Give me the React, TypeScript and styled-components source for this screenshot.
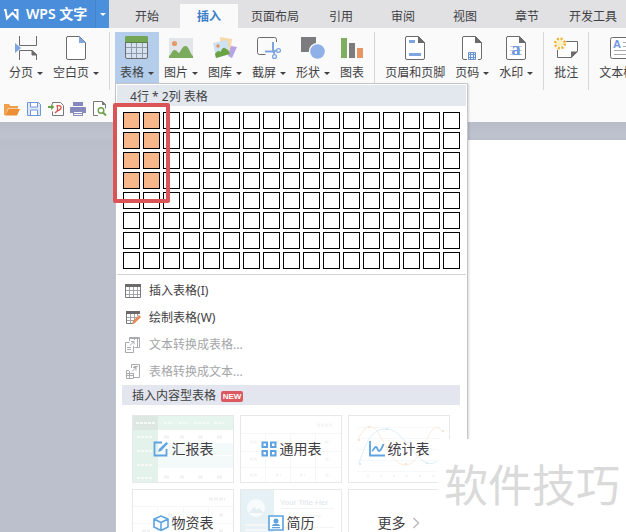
import React from "react";
import styled, { createGlobalStyle, css } from "styled-components";

const GlobalStyle = createGlobalStyle`
  * { box-sizing: border-box; }
  body {
    margin: 0;
    font-family: "Noto Sans", "Noto Sans CJK SC", sans-serif;
    font-size: 12px;
    line-height: 16px;
    color: #3f4043;
  }
  button {
    font: inherit;
    color: inherit;
    background: none;
    border: 0;
    padding: 0;
    margin: 0;
  }
`;

const Window = styled.div`
  position: relative;
  display: flex;
  flex-direction: column;
  height: 100vh;
  overflow: hidden;
  background: #bcc0cc;
`;

/* ---------- title and tabs ---------- */

const TitleBar = styled.header`
  display: flex;
  height: 28px;
  flex: none;
  background: #e1e1e3;
`;

const AppButton = styled.button`
  display: flex;
  align-items: center;
  gap: 6px;
  width: 95px;
  padding-left: 4px;
  flex: none;
  color: #fff;
  background: #4a8edb;
  font-size: 14px;
  font-weight: 600;
  white-space: nowrap;
`;

const AppMenuButton = styled.button`
  display: flex;
  align-items: center;
  justify-content: center;
  width: 14px;
  flex: none;
  color: #fff;
  background: #4a90dd;
  border-left: 1px solid #4384cd;
`;

const Tabs = styled.nav`
  display: flex;
  align-items: flex-end;
  margin-left: 7px;
`;

const Tab = styled.button<{ $active?: boolean }>`
  height: 24px;
  min-width: 58px;
  padding: 2px 9px 0;
  margin: 0 2px;
  flex: none;
  ${(p) =>
    p.$active &&
    css`
      background: #fafafa;
      color: #3a7fc8;
      font-weight: 700;
    `}
`;

/* ---------- ribbon ---------- */

const Ribbon = styled.section`
  flex: none;
  height: 94px;
  background: #fafafa;
`;

const ToolRow = styled.div`
  display: flex;
  align-items: flex-start;
  padding: 4px 0 0 4px;
`;

const ToolSlot = styled.div`
  position: relative;
  flex: none;
`;

const Tool = styled.button<{ $open?: boolean }>`
  display: flex;
  flex-direction: column;
  align-items: center;
  gap: 5px;
  height: 51px;
  padding: 4px 5px 0;
  background: ${(p) => (p.$open ? "#b3cdea" : "transparent")};
`;

const ToolLabel = styled.span`
  display: flex;
  align-items: center;
  gap: 4px;
  white-space: nowrap;
`;

const Separator = styled.span`
  width: 1px;
  height: 58px;
  margin: 0 5px;
  flex: none;
  background: #d5d7da;
`;

const QuickBar = styled.div`
  display: flex;
  gap: 6px;
  padding: 11px 0 0 4px;
`;

const QuickButton = styled.button`
  display: flex;
  width: 16px;
  height: 16px;
`;

const Canvas = styled.main`
  flex: 1;
  min-height: 0;
  display: flex;
  padding: 18px 0 0 140px;
  background: linear-gradient(#b9bdca, #bfc3cf 14px, #babeca 18px, #bcc0cc 30px);
`;

const Sheet = styled.div`
  flex: 1;
  background: #fff;
`;

/* ---------- table menu ---------- */

const Menu = styled.div`
  position: absolute;
  z-index: 2;
  top: 51px;
  left: 0;
  width: 353px;
  padding: 1px;
  background: #fff;
  border: 1px solid #c3c5c9;
  box-shadow: 1px 1px 2px rgba(0, 0, 0, 0.15);
`;

const SizeCaption = styled.div`
  height: 21px;
  padding-left: 13px;
  line-height: 24px;
  background: #e3e7ee;
`;

const SizeGrid = styled.div`
  position: relative;
  display: grid;
  grid-template-columns: repeat(17, 17px);
  grid-auto-rows: 17px;
  gap: 3px;
  padding: 6px 6px 5px;
  border-bottom: 1px solid #d3d4d7;
`;

const Cell = styled.button<{ $on: boolean }>`
  border: 1px solid #000;
  background: ${(p) => (p.$on ? "#f8b78b" : "#fff")};
`;

const Highlight = styled.div`
  position: absolute;
  top: -3px;
  left: -4px;
  width: 57px;
  height: 100px;
  border: 4px solid #da5457;
  border-radius: 2px;
  pointer-events: none;
`;

const Commands = styled.div`
  display: flex;
  flex-direction: column;
  padding-top: 2px;
`;

const Command = styled.button`
  display: flex;
  align-items: center;
  gap: 8px;
  height: 27px;
  padding-left: 8px;
  text-align: left;
  &:disabled {
    color: #a4a5a8;
  }
`;

const SectionTitle = styled.h2`
  display: flex;
  align-items: center;
  gap: 5px;
  height: 20px;
  margin: 0 6px 0 5px;
  padding: 2px 0 0 10px;
  font-size: 12px;
  font-weight: 400;
  background: #e3e6ee;
`;

const Badge = styled.span`
  width: 22px;
  height: 11px;
  border-radius: 2px;
  background: #dc5960;
  color: #fff;
  font: 700 8px/11px "Liberation Sans", sans-serif;
  text-align: center;
`;

const Cards = styled.div`
  display: grid;
  grid-template-columns: repeat(3, 102px);
  grid-auto-rows: 68px;
  gap: 6px;
  padding: 10px 15px;
`;

const Card = styled.button`
  position: relative;
  border: 1px solid #e6e8ea;
  background: #fff;
  overflow: hidden;
`;

const Preview = styled.svg`
  position: absolute;
  inset: 0;
  width: 100px;
  height: 66px;
  opacity: 0.6;
`;

const CardLabel = styled.span`
  position: relative;
  display: flex;
  align-items: center;
  justify-content: center;
  gap: 3px;
  font-size: 14px;
  line-height: 20px;
`;

const Watermark = styled.div`
  position: absolute;
  z-index: 3;
  right: 0;
  bottom: 0;
  width: 188px;
  height: 93px;
  padding-left: 6px;
  background: #fff;
  color: #dadada;
  font-size: 44px;
  line-height: 93px;
  white-space: nowrap;
`;

/* ---------- drawings ---------- */

const ink = "#6b6b6d";
const blue = "#7fa5e0";

const Arrow = () => (
  <svg width="6" height="3" viewBox="0 0 6 3" aria-hidden="true">
    <path d="M0 0h6L3 3z" fill="currentColor" />
  </svg>
);

const Svg24 = ({ children }: { children: React.ReactNode }) => (
  <svg width="24" height="24" viewBox="0 0 24 24" fill="none" aria-hidden="true">
    {children}
  </svg>
);

const PageOutline = ({ fold = ink }: { fold?: string }) => (
  <>
    <path d="M3.500.5h12l6 6v15.500a1.500 1.500 0 0 1-1.500 1.500h-16a1.500 1.500 0 0 1-1.500-1.500v-20a1.500 1.500 0 0 1 1.500-1.500z" fill="#fff" stroke={ink} />
    <path d="M15 0v7h7z" fill={fold} />
  </>
);

const BreakIcon = () => (
  <Svg24>
    <path d="M5.500 0v9.500h17V0M5.500 24v-9.500H18l4.500 4.500v5" stroke={ink} />
    <path d="M18 14.500V19h5z" fill={ink} stroke={ink} />
    <path d="M1 7l6 5-6 5z" fill={blue} />
  </Svg24>
);

const BlankIcon = () => (
  <Svg24>
    <PageOutline fold={blue} />
  </Svg24>
);

const TableIcon = () => (
  <Svg24>
    <rect x="0.5" y="0.5" width="22" height="22" rx="1.500" fill="#d3e1f1" stroke={ink} />
    <path d="M0 6V2Q0 0 2 0h19q2 0 2 2v4z" fill="#74a552" />
    <path d="M0 6.500h23" stroke="#5d7d4c" />
    <path d="M1 11.500h21M1 17.500h21M6.500 7v15M11.500 7v15M17.500 7v15" stroke="#929ba7" />
  </Svg24>
);

const PictureIcon = () => (
  <Svg24>
    <rect y="2" width="24" height="20" fill="#e2e6ea" />
    <circle cx="5.500" cy="7.500" r="2.600" fill="#e69a6d" />
    <path d="M0 22v-2c2-1 3-6 5.500-6S9 17 10 17s3-7 6.500-7S21 18 24 20v2z" fill="#7bab5c" />
  </Svg24>
);

const GalleryIcon = () => (
  <Svg24>
    <path d="M7 1l12 2-2 15-9-2z" fill="#f5d9a8" />
    <path d="M18 10l6 1-5 11-4-2z" fill="#b7a2e6" />
    <path d="M0 7l14-3 3 14-14 4z" fill="#cfe2f3" />
    <circle cx="5" cy="10" r="1.700" fill="#e8935e" />
    <path d="M3 22l-1-4C4 15 6 14 7.500 16c2-5 4-5 5.500-3 1.500 0 2.500 1.500 3.500 3l.5 2z" fill="#69a344" />
  </Svg24>
);

const CaptureIcon = () => (
  <Svg24>
    <path d="M8.500 18.500h-6a2 2 0 0 1-2-2v-13a2 2 0 0 1 2-2h15a2 2 0 0 1 2 2V6" stroke={ink} />
    <path d="M16 6v8l1.500 4M8 15.500h9l2-1" stroke={blue} strokeWidth="2" />
    <circle cx="21.500" cy="14.500" r="1.900" stroke={blue} strokeWidth="1.400" />
    <circle cx="17.500" cy="20.500" r="1.900" stroke={blue} strokeWidth="1.400" />
  </Svg24>
);

const ShapesIcon = () => (
  <Svg24>
    <path d="M0 1h15v15H0z" fill="#7c7c7e" />
    <circle cx="16.500" cy="15.500" r="8" fill="#8fb1e8" stroke="#fafafa" strokeWidth="1.400" />
  </Svg24>
);

const ChartIcon = () => (
  <Svg24>
    <path d="M1 2h6v20H1z" fill="#7fae60" />
    <path d="M9 7h6v15H9z" fill="#7c7c7e" />
    <path d="M17 12h6v10h-6z" fill="#e69563" />
  </Svg24>
);

const HeaderIcon = () => (
  <Svg24>
    <PageOutline />
    <path d="M6 4h6v3H6zM6 17h12v3H6z" fill={blue} />
  </Svg24>
);

const PageNumberIcon = () => (
  <Svg24>
    <PageOutline />
    <path d="M7 15h11v9H7z" fill="#fafafa" />
    <path d="M8.500 16.500h7v7h-7z" fill="#e6eefb" stroke="#6d93cf" />
    <path d="M10.500 17v6M13.500 17v6M9 18.500h6M9 21.500h6" stroke="#6d93cf" />
  </Svg24>
);

const WatermarkIcon = () => (
  <Svg24>
    <PageOutline />
    <path d="M6 10.500h12M6 14.500h12M6 18.500h12" stroke="#c9cdd4" />
    <text x="12" y="19" textAnchor="middle" fontFamily="Liberation Serif, serif" fontSize="19" fontWeight="700" fill="#6f98dc">
      a
    </text>
  </Svg24>
);

const CommentIcon = () => (
  <Svg24>
    <path d="M11 5.500h12.500V15l-6 6.500h-14V14" fill="#fff" stroke={ink} />
    <path d="M17 22v-6.500h7z" fill={ink} />
    <circle cx="6" cy="7.500" r="6.500" fill="#fafafa" />
    <circle cx="6" cy="7.500" r="3" fill="#fdf0c0" />
    <circle cx="6" cy="7.500" r="4.800" stroke="#efb52f" strokeWidth="2.600" strokeDasharray="2.100 1.670" />
  </Svg24>
);

const TextBoxIcon = () => (
  <Svg24>
    <rect x="0.5" y="1.500" width="23" height="21" rx="2" fill="#fff" stroke={ink} />
    <text x="3" y="12" fontFamily="Liberation Sans, sans-serif" fontSize="11" fontWeight="700" fill="#6f98dc">
      A
    </text>
    <path d="M13 6.500h8M13 10.500h8M4 14.500h17M4 18.500h17" stroke="#a9abb0" />
  </Svg24>
);

const Svg16 = ({ children }: { children: React.ReactNode }) => (
  <svg width="16" height="16" viewBox="0 0 16 16" fill="none" aria-hidden="true">
    {children}
  </svg>
);

const OpenIcon = () => (
  <Svg16>
    <path d="M0 14V3h5l1.500 2H14v2.500H4L1.500 14z" fill="#f0a04b" />
    <path d="M4.500 8H16l-3 6.500H1z" fill="#ec8f34" />
  </Svg16>
);

const SaveIcon = () => (
  <Svg16>
    <path d="M1.500 1.500h11l2 2v11h-13z" fill="#dfe8f8" stroke="#7297d6" />
    <path d="M4.500 2v4h7V2M4.500 14v-5h7v5" fill="#fff" stroke="#7297d6" />
  </Svg16>
);

const PdfIcon = () => (
  <Svg16>
    <path d="M4.500 3.500v-2h8l3 3v10h-11v-4" fill="#fff" stroke="#77787b" />
    <path d="M0 5h3V3l3.500 3L3 9V7H0z" fill="#6da14d" />
    <path d="M7 12c3-1 3-5 2-7 4-1 5 1 3.500 3S9 9.500 7 12" stroke="#d65552" strokeWidth="1.300" />
  </Svg16>
);

const PrintIcon = () => (
  <Svg16>
    <path d="M3 1h10v4H3zM1 6h14q1 0 1 1v5H0V7q0-1 1-1zM3 10h10v5H3z" fill="#8589bd" />
    <path d="M4 11h8v1H4zM4 13h8v1H4zM3 5h10v1H3z" fill="#fff" />
  </Svg16>
);

const PreviewIcon = () => (
  <Svg16>
    <path d="M6 14.500H1.500V.5h9l3 3v4" fill="#fff" stroke="#77787b" />
    <path d="M10 0v4h4z" fill="#77787b" />
    <circle cx="9" cy="9.500" r="2.800" stroke="#6da14d" strokeWidth="1.400" />
    <path d="M11 11.500l3 3" stroke="#6da14d" strokeWidth="1.800" />
  </Svg16>
);

const InsertGridIcon = () => (
  <Svg16>
    <path d="M.5 1.500h15v13H.5z" fill="#fff" stroke="#77787b" />
    <path d="M0 1h16v3H0z" fill="#6b6b6d" />
    <path d="M1 7.500h14M1 11.500h14M4.500 4v10M8.500 4v10M12.500 4v10" stroke="#a4a5a8" />
  </Svg16>
);

const DrawGridIcon = () => (
  <Svg16>
    <path d="M14.500 4V1.500h-13v12H8" stroke="#77787b" />
    <path d="M1 1h14v3H1z" fill="#6b6b6d" />
    <path d="M2 7.500h10M2 10.500h7M5.500 4v9M9.500 4v6M12.500 4v2" stroke="#a4a5a8" />
    <path d="M14 5l2 2-6 6-3 1.500L8 11z" fill="#e08b55" />
  </Svg16>
);

const TextToTableIcon = () => (
  <Svg16>
    <path d="M4.500 4V.5h10v10H9.500M4 1.500h11M12.500 2v8M9.500 2v1" stroke="#a9aaad" />
    <path d="M.5 5.500h4M.5 5.500v10h8V9M2 10.500h4M2 12.500h4M5 8.500L9 4.500M6 4.500h3v3" stroke="#a9aaad" />
  </Svg16>
);

const TableToTextIcon = () => (
  <Svg16>
    <path d="M6.500 4V.5h8v13H8M9 2.500h4" stroke="#a9aaad" />
    <path d="M4 6.500H1.500v8h7V9M1 9.500h8M4.500 7v7M1 11.500h7M7 7.500l4-4M8 3.500h3v3" stroke="#a9aaad" />
  </Svg16>
);

const accent = "#5ea3e0";

const EditIcon = () => (
  <Svg16>
    <path d="M9 1.500H1.500v13h12V8" stroke={accent} strokeWidth="1.800" />
    <path d="M5 11l1-3 7.500-7 1.500 1.500L8 10z" fill={accent} />
  </Svg16>
);

const TilesIcon = () => (
  <Svg16>
    <path d="M1.500 1.500h4.500v4.500H1.500zM10 1.500h4.500v4.500H10zM1.500 10h4.500v4.500H1.500zM10 10h4.500v4.500H10z" stroke={accent} strokeWidth="2" />
  </Svg16>
);

const StatsIcon = () => (
  <Svg16>
    <path d="M1 0v14.500h15" stroke={accent} strokeWidth="1.800" />
    <path d="M3 10c2-1 2-4 4-4s1 4 3 4 3-3 4.500-7" stroke={accent} strokeWidth="1.800" />
  </Svg16>
);

const CubeIcon = () => (
  <Svg16>
    <path d="M8 1l7 3v8l-7 3.500L1 12V4zM1 4l7 3.500L15 4M8 7.500v8" stroke={accent} strokeWidth="1.600" />
  </Svg16>
);

const ResumeIcon = () => (
  <Svg16>
    <path d="M1 1h14v14H1z" fill="#fff" stroke={accent} strokeWidth="1.600" />
    <circle cx="8" cy="6" r="2.500" fill={accent} />
    <path d="M4 11c0-3 8-3 8 0zM4 12h8v1.300H4z" fill={accent} />
  </Svg16>
);

const Chevron = () => (
  <svg width="12" height="14" viewBox="0 0 12 14" fill="none" aria-hidden="true">
    <path d="M4.500 2l5 5-5 5" stroke="#bcbdc0" strokeWidth="1.600" />
  </svg>
);

const ReportPreview = () => (
  <Preview viewBox="0 0 100 66" aria-hidden="true">
    <path d="M0 0h100v14H0z" fill="#d6f0e4" />
    <path d="M0 14h25v52H0z" fill="#d2ecde" />
    <path d="M0 0h25v14H0z" fill="#c8d9d1" />
    <path d="M25 27h75v12H25zM25 40h75v12H25z" fill="#eef8f8" />
    <path d="M3 7h20M31 7h9M46 7h9M61 7h15M81 7h10M4 21h15M4 35h15M4 49h15M4 62h15" stroke="#eef8f3" strokeWidth="2" strokeDasharray="3 1" />
    <path d="M31 21h5M47 21h4M65 21h5M84 21h5M31 61h5M47 61h4M65 61h5M84 61h5" stroke="#e8eaea" strokeWidth="3" />
  </Preview>
);

const GridPreview = () => (
  <Preview viewBox="0 0 100 66" aria-hidden="true">
    <path d="M0 17.500h100M0 35.500h100M0 51.500h100M24.500 17v49M49.500 17v49M74.500 17v49" stroke="#f0f1f2" />
    <path d="M76 9h16M9 26h8M9 43h8M9 59h8M35 26h5M35 59h5M59 59h5M84 26h5M84 43h5M84 59h5" stroke="#f0f0f1" strokeWidth="3" strokeDasharray="3 1" />
  </Preview>
);

const CurvePreview = () => (
  <Preview viewBox="0 0 100 66" aria-hidden="true">
    <path d="M8 11.500h84M8 22.500h84M8 33.500h84M8 44.500h84M8 55.500h84" stroke="#f3f5f7" />
    <path d="M9 24C15 10 22 7 28 15C37 27 42 49 57 49S78 12 88 11l6 4" fill="none" stroke="#fbdfc8" />
    <path d="M10 48C18 20 26 13 37 13C54 13 62 40 78 47C85 49 88 45 92 42" fill="none" stroke="#cae6f6" />
    <path d="M18 60h2M31 60h2M44 60h2M57 60h2M70 60h2M83 60h2" stroke="#eceeef" strokeWidth="2" />
    <path d="M9 24h2M19 11h2M56 48h2M93 15h2" stroke="#f6d3b8" strokeWidth="2" />
    <path d="M10 48h2M37 13h2M77 47h2" stroke="#b9dff4" strokeWidth="2" />
  </Preview>
);

const StockPreview = () => (
  <Preview viewBox="0 0 100 66" aria-hidden="true">
    <path d="M0 16.500h100M0 33.500h100M0 50.500h100M24.500 16v50M50.500 16v50M75.500 16v50" stroke="#f0f1f2" />
    <path d="M76 9h16M35 25h5M60 25h5M86 25h5M9 41h8M86 41h5" stroke="#e9e9ea" strokeWidth="3" strokeDasharray="4 1" />
  </Preview>
);

const ResumePreview = () => (
  <Preview viewBox="0 0 100 66" aria-hidden="true">
    <path d="M0 0h33v66H0z" fill="#d6e9ef" />
    <circle cx="15" cy="18" r="9" fill="#f3f9fb" />
    <path d="M8 23l5-6 3 3 2-2 5 5z" fill="#cfe3ea" />
    <text x="39" y="15" fontFamily="Liberation Sans, sans-serif" fontSize="8" fill="#c8d3d9">
      Your Title Her
    </text>
    <path d="M39 18.500h54M39 37.500h54" stroke="#eaeff1" />
    <path d="M58 26h22M4 35h22M4 40h22" stroke="#f1f4f5" strokeWidth="2" />
  </Preview>
);

/* ---------- content ---------- */

type ToolDef = { label: string; icon: React.ReactNode; arrow?: boolean; open?: boolean };

const groups: ToolDef[][] = [
  [
    { label: "分页", icon: <BreakIcon />, arrow: true },
    { label: "空白页", icon: <BlankIcon />, arrow: true },
  ],
  [
    { label: "表格", icon: <TableIcon />, arrow: true, open: true },
    { label: "图片", icon: <PictureIcon />, arrow: true },
    { label: "图库", icon: <GalleryIcon />, arrow: true },
    { label: "截屏", icon: <CaptureIcon />, arrow: true },
    { label: "形状", icon: <ShapesIcon />, arrow: true },
    { label: "图表", icon: <ChartIcon /> },
  ],
  [
    { label: "页眉和页脚", icon: <HeaderIcon /> },
    { label: "页码", icon: <PageNumberIcon />, arrow: true },
    { label: "水印", icon: <WatermarkIcon />, arrow: true },
  ],
  [{ label: "批注", icon: <CommentIcon /> }],
  [{ label: "文本框", icon: <TextBoxIcon />, arrow: true }],
];

const tabs = ["开始", "插入", "页面布局", "引用", "审阅", "视图", "章节", "开发工具"];

const quick = [
  { name: "打开", icon: <OpenIcon /> },
  { name: "保存", icon: <SaveIcon /> },
  { name: "输出为PDF", icon: <PdfIcon /> },
  { name: "打印", icon: <PrintIcon /> },
  { name: "打印预览", icon: <PreviewIcon /> },
];

const commands = [
  { label: "插入表格(I)", icon: <InsertGridIcon /> },
  { label: "绘制表格(W)", icon: <DrawGridIcon /> },
  { label: "文本转换成表格...", icon: <TextToTableIcon />, disabled: true },
  { label: "表格转换成文本...", icon: <TableToTextIcon />, disabled: true },
];

const cards = [
  { label: "汇报表", icon: <EditIcon />, preview: <ReportPreview /> },
  { label: "通用表", icon: <TilesIcon />, preview: <GridPreview /> },
  { label: "统计表", icon: <StatsIcon />, preview: <CurvePreview /> },
  { label: "物资表", icon: <CubeIcon />, preview: <StockPreview /> },
  { label: "简历", icon: <ResumeIcon />, preview: <ResumePreview /> },
];

const COLUMNS = 17;
const ROWS = 8;
const selection = { rows: 4, columns: 2 };

const TableMenu = () => (
  <Menu>
    <SizeCaption>
      {selection.rows}行 * {selection.columns}列 表格
    </SizeCaption>
    <SizeGrid>
      {Array.from({ length: ROWS * COLUMNS }, (_, i) => {
        const row = Math.floor(i / COLUMNS);
        const column = i % COLUMNS;
        return (
          <Cell
            key={i}
            aria-label={`${row + 1}行 ${column + 1}列`}
            $on={row < selection.rows && column < selection.columns}
          />
        );
      })}
      <Highlight />
    </SizeGrid>
    <Commands>
      {commands.map((c) => (
        <Command key={c.label} disabled={c.disabled}>
          {c.icon}
          {c.label}
        </Command>
      ))}
    </Commands>
    <SectionTitle>
      插入内容型表格 <Badge>NEW</Badge>
    </SectionTitle>
    <Cards>
      {cards.map((c) => (
        <Card key={c.label}>
          {c.preview}
          <CardLabel>
            {c.icon}
            {c.label}
          </CardLabel>
        </Card>
      ))}
      <Card>
        <CardLabel>
          更多
          <Chevron />
        </CardLabel>
      </Card>
    </Cards>
  </Menu>
);

export default function App() {
  return (
    <Window>
      <GlobalStyle />
      <TitleBar>
        <AppButton>
          <svg width="16" height="14" viewBox="0 0 16 14" fill="none" aria-hidden="true">
            <path d="M0 3h2.500M1.500 3l1.500 8.500L8.500 6l5 5.500V3H10" stroke="#fff" strokeWidth="2" />
          </svg>
          WPS 文字
        </AppButton>
        <AppMenuButton aria-label="应用菜单">
          <Arrow />
        </AppMenuButton>
        <Tabs>
          {tabs.map((t) => (
            <Tab key={t} $active={t === "插入"}>
              {t}
            </Tab>
          ))}
        </Tabs>
      </TitleBar>
      <Ribbon>
        <ToolRow>
          {groups.map((group, g) => (
            <React.Fragment key={g}>
              {g > 0 && <Separator />}
              {group.map((t) => (
                <ToolSlot key={t.label}>
                  <Tool $open={t.open}>
                    {t.icon}
                    <ToolLabel>
                      {t.label}
                      {t.arrow && <Arrow />}
                    </ToolLabel>
                  </Tool>
                  {t.open && <TableMenu />}
                </ToolSlot>
              ))}
            </React.Fragment>
          ))}
        </ToolRow>
        <QuickBar>
          {quick.map((q) => (
            <QuickButton key={q.name} aria-label={q.name}>
              {q.icon}
            </QuickButton>
          ))}
        </QuickBar>
      </Ribbon>
      <Canvas>
        <Sheet />
      </Canvas>
      <Watermark>软件技巧</Watermark>
    </Window>
  );
}
